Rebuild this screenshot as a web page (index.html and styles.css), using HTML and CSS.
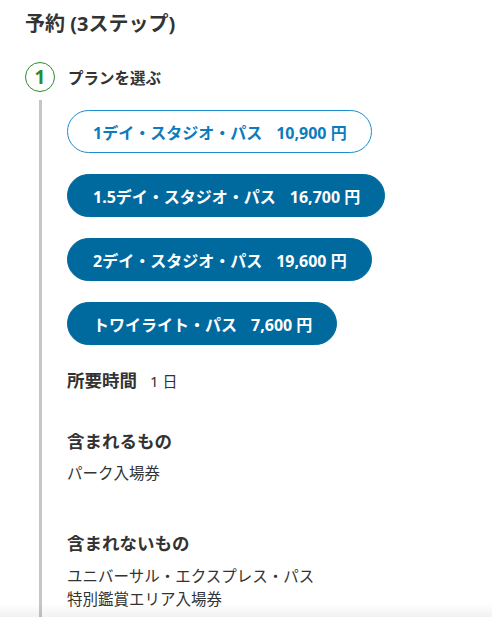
FILE: index.html
```html
<!DOCTYPE html>
<html lang="ja">
<head>
<meta charset="utf-8">
<link rel="stylesheet" href="styles.css">
</head>
<body>
<div class="page">
  <h1 class="title">予約 (3ステップ)</h1>
  <div class="step-head">
    <span class="step-num">1</span>
    <span class="step-title">プランを選ぶ</span>
  </div>
  <div class="step-body">
    <div class="plans">
      <button class="plan plan-outline">1デイ・スタジオ・パス<span class="price">10,900 円</span></button>
      <button class="plan">1.5デイ・スタジオ・パス<span class="price">16,700 円</span></button>
      <button class="plan">2デイ・スタジオ・パス<span class="price">19,600 円</span></button>
      <button class="plan">トワイライト・パス<span class="price">7,600 円</span></button>
    </div>
    <div class="duration"><span class="label">所要時間</span><span class="value">1 日</span></div>
    <h3 class="sub-head first">含まれるもの</h3>
    <p class="list">パーク入場券</p>
    <h3 class="sub-head second">含まれないもの</h3>
    <p class="list tight">ユニバーサル・エクスプレス・パス<br>特別鑑賞エリア入場券</p>
  </div>
</div>
<div class="bottom-fade"></div>
</body>
</html>
```

FILE: styles.css
```css
html, body {
  margin: 0;
  padding: 0;
  background: #ffffff;
}
body {
  font-family: "Noto Sans", "Noto Sans CJK JP", sans-serif;
  color: #333333;
  overflow: hidden;
}
.page {
  padding: 12px 25px 0 25px;
}
.title {
  margin: 0;
  font-size: 20px;
  line-height: 24px;
  font-weight: 700;
  color: #333333;
}
.step-head {
  display: flex;
  align-items: center;
  margin-top: 26px;
  height: 30px;
}
.step-num {
  box-sizing: border-box;
  width: 30px;
  height: 30px;
  border: 1.5px solid #2d8a2d;
  border-radius: 50%;
  color: #2d8a2d;
  font-weight: 700;
  font-size: 19px;
  display: flex;
  align-items: center;
  justify-content: center;
  line-height: 1;
}
.step-title {
  margin-left: 13px;
  font-size: 15.5px;
  font-weight: 700;
  color: #333333;
}
.step-body {
  margin-left: 14px;
  margin-top: 8px;
  border-left: 3px solid #c6c6c6;
  padding-left: 25px;
  padding-top: 10px;
  padding-bottom: 10px;
}
.plans {
  display: flex;
  flex-direction: column;
  align-items: flex-start;
  gap: 21px;
}
.plan {
  box-sizing: border-box;
  height: 43px;
  padding: 0 24px 0 25px;
  border-radius: 22px;
  border: 1px solid #006a9f;
  background: #006a9f;
  color: #ffffff;
  font-family: "Noto Sans", "Noto Sans CJK JP", sans-serif;
  font-size: 16px;
  font-weight: 700;
  display: flex;
  align-items: center;
  cursor: pointer;
}
.plan-outline {
  background: #ffffff;
  border-color: #1a8dcf;
  color: #0b7cbd;
}
.price {
  margin-left: 14px;
}
.duration {
  margin-top: 23px;
  line-height: 24px;
  display: flex;
  align-items: baseline;
}
.duration .label {
  font-size: 17.5px;
  font-weight: 700;
}
.duration .value {
  margin-left: 13px;
  font-size: 15px;
}
.sub-head {
  margin: 0;
  font-size: 17.5px;
  line-height: 24px;
  font-weight: 700;
}
.sub-head.first {
  margin-top: 36px;
}
.sub-head.second {
  margin-top: 46px;
}
.list {
  margin: 8px 0 0 0;
  font-size: 15.5px;
  line-height: 24px;
  color: #333333;
}
.list.tight {
  margin-top: 10px;
  line-height: 23px;
}
.bottom-fade {
  position: fixed;
  left: 0;
  right: 0;
  bottom: 0;
  height: 14px;
  background: linear-gradient(to bottom, rgba(0,0,0,0), rgba(0,0,0,0.05));
  pointer-events: none;
}
```
